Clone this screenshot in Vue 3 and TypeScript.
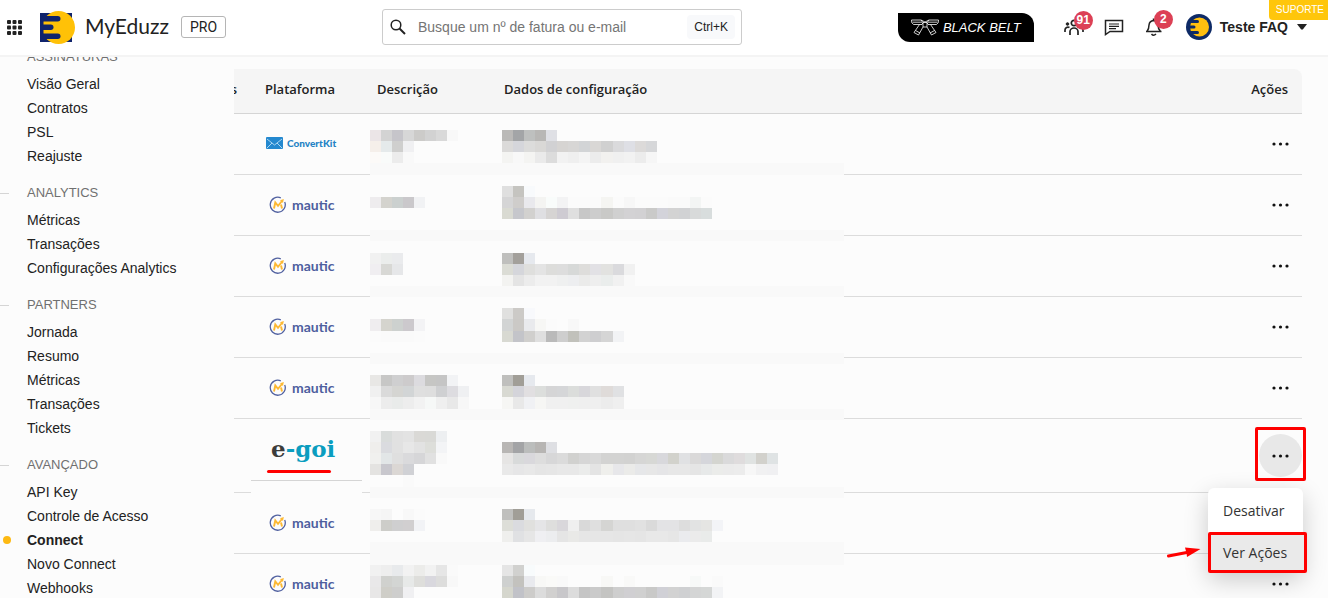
<script setup lang="ts">
interface NavItem {
  label: string
  active?: boolean
}
interface NavGroup {
  title: string
  items: NavItem[]
}
type Brand = 'convertkit' | 'mautic' | 'egoi'
interface Row {
  id: number
  brand: Brand
  open?: boolean
}
interface Cell {
  x: number
  y: number
  fill: string
}

const groups: NavGroup[] = [
  { title: 'ASSINATURAS', items: [{ label: 'Visão Geral' }, { label: 'Contratos' }, { label: 'PSL' }, { label: 'Reajuste' }] },
  { title: 'ANALYTICS', items: [{ label: 'Métricas' }, { label: 'Transações' }, { label: 'Configurações Analytics' }] },
  {
    title: 'PARTNERS',
    items: [{ label: 'Jornada' }, { label: 'Resumo' }, { label: 'Métricas' }, { label: 'Transações' }, { label: 'Tickets' }],
  },
  {
    title: 'AVANÇADO',
    items: [
      { label: 'API Key' },
      { label: 'Controle de Acesso' },
      { label: 'Connect', active: true },
      { label: 'Novo Connect' },
      { label: 'Webhooks' },
    ],
  },
]

const brands: Brand[] = ['convertkit', 'mautic', 'mautic', 'mautic', 'mautic', 'egoi', 'mautic', 'mautic']
const rows: Row[] = brands.map((brand, id) => ({ id, brand, open: brand === 'egoi' }))

// Mosaic that hides private data: [grid row, first grid column, colours of consecutive tiles]
const mosaic: [number, number, string][] = [
  [0, 0, 'ebe5e7 d3d3d3 c6c5ca d7d7d7 cccbc9 d2d2d2 d9d9d9 f8f8f8'],
  [1, 0, 'f5efea e5eaeb cfcfce f0f0f2'],
  [2, 0, 'fcfaf8 f9fbfa ececec f9f9f9'],
  [0, 12, 'bab9b7 a3a5a7 bec0bf b8b7b5 dfe0e5'],
  [1, 12, 'dbdad9 d5d6db dcdcdb d9d8d6 d1d1d3 d6d4d2 d7d6d5 d2d4d6 d9d7d5 d0d0d0 dadadc dedfe5 dcdad9 d6d7d9'],
  [2, 12, 'f4f4f2 f8f8f8 f4f4f2 eaeaea dcdcdc f2f2f2 efefef f4f4f4 ececec f2f1ef f0f0f0 f2f2f2 ececec f6f6f6'],
  [6, 0, 'eeecee d4d3ce cbd0cf cac8cb f1f2f4'],
  [5, 12, 'dfdfdf c5c4c0 f8fafc'],
  [6, 12, 'd5d5d6 cfcdcb e9e9ed f4f4f2 f9fcfb f3f3f4 fbfbfb fbfbfb fbfbfb f5f5f2 fbfbfb f7f7f7 fbfbfb fbfbfb fbfbfb fafafa fafafa f3f5f4 fbfbfb'],
  [7, 12, 'd9dad2 c6c7cc d2d1cf dfdfe2 d6d4d3 cecbd2 dfdfdf c7c7c7 cdcdcd c9c9c7 d0d0d0 d3d2d4 d2d1d3 cacac9 d3d3da d3d3d3 d1d2d4 d8dada d8dddd'],
  [11, 0, 'f1f1f1 ebedec eaebed'],
  [12, 0, 'f0eef1 d8d8d5 e6e7e9'],
  [11, 12, 'bfbfbd a3a09b e6e9ee'],
  [12, 12, 'dbdcd5 d5d6db dfdfdd e4e4e4 dddddb dddddd d7d9d8 dedddb e2e1e5 e2e2e0 dadadd f1f1f1'],
  [13, 12, 'f3f3f1 e4e4e4 ececec f2f2f2 f2f2f2 eff0f0 edeef0 ebebea eeeeee eaedec f1f1f1 f9f9f9'],
  [17, 0, 'efedef d5d4ce cdd1cf ccc9cd f3f3f5'],
  [18, 0, 'fbfbfb fafafa fafafa fafafa fbfbfb'],
  [16, 12, 'e0e0df cccac7 f8f9fc'],
  [17, 12, 'd2d4d4 cbc9c6 e9eaed f7f7f5 fbfbfb fcfcfc f8f8f8'],
  [18, 12, 'd8d9d2 c3c4c9 d0cfcd dfdfdf bababa cecece c1c1bb d2d2d2 ceced0 d5d5d5 f2f3f5'],
  [22, 0, 'e8e7e5 c7c7c6 cfcfd0 cdcbcc dcdbdf c6c6c4 c5c5c5 f2f3f5'],
  [23, 0, 'f0f0f0 dadada d5d5d2 d2d5d6 dfdfdf dedede cfd0d2 dddce0 eff0f2'],
  [24, 0, 'f7f7f7 ececec e9ebea ededed f2f2f2 f6f8f7 efefef e8e8e8 f7f7f7'],
  [22, 12, 'bfbfbd a19e97 e6e9ee'],
  [23, 12, 'd8d9d2 d4d4da e1dfe1 dcdedc d5d5d6 d5d6d8 dbdddb d8d7db e0e0e0 dfdbd9 e0e1e3'],
  [24, 12, 'f6f6f4 e8e8e8 f0f1f4 f6f6f4 f0f0f0 f0f0f0 eff0ef efefef efefef ececec efefef'],
  [27, 0, 'f1f1f1 d9dcdb e1e1e1 e3e3e3 dad9d6 d9d9d6 edeff1'],
  [28, 0, 'efeeec dadbdf e1e1e1 e7e7e7 e2e2e2 dddeda f3f4f6'],
  [29, 0, 'f0f0ee e2e6e7 dfdfdf dadadc d6d6d8 e1e1e1 f9f9f9'],
  [30, 0, 'e4e3e1 c8c7cd dbd7d4 d0d1d5'],
  [31, 3, 'fafafa'],
  [28, 12, 'b8b6b4 a3a4a6 bbbdbc b7b5b3 dedfe3'],
  [29, 12, 'e6e5e4 d8dada d9d8dc dddddd d7d7d8 dbdbdb d1d1cf d6d6d6 d9d9d9 d3d3d2 d3d3d2 d2d2d1 d6d6d5 d7d8d5 d8d8dc d2d2cc e0e1e3 dad9d9 d5d6db d4d5d0 dadadb dfdcdd e0e3e2 d2d1cc dfe3e4'],
  [30, 12, 'e9e9e9 e6e6e7 e8e8e8 e5e5e5 e6e6e6 e8e8e8 e8e8e8 ebeceb e4e4e4 efefec e7e7ea ebebe9 e6e7e9 e7e7e7 e5e5e7 e7e7e7 e7e7e7 e5e5e5 e7e9e9 ebecea ebebeb ececec f7f7f7 f1f1f2 f0f0f2'],
  [34, 0, 'f7f7f7 f5f5f5 fcfcfc f8f8f8 fbfbfb'],
  [35, 0, 'efeeec cdcdc9 cfcfd0 d1cfd0 f2f3f6'],
  [34, 12, 'bfbfbd a19e97 e6e9ed'],
  [35, 12, 'ddded8 dadbdf e0e0de e5e5e7 dededd d9d7db efefef d9d9d9 dfdfdf d5d5d3 dfdfdf dfdfdf e1e1e1 dadada e3e3e5 e3e3e5 dddddd e2e3e3 e5e5e3 f3f4f7'],
  [36, 12, 'efefed e0e1e3 e6e6e6 efeff2 ecedef e5e5e5 e9e9e7 e6e6e6 e6e6e6 e6e6e6 e5e5e5 e6e6e6 e5e5e5 e8e8e8 e8e8e8 e6e6e6 eaebee ebebeb e9ebea'],
  [39, 0, 'f1f1f1 eeeeee e8eaec f2f2f2 ececea f2f2f2 e6e6e6 fafafa'],
  [40, 0, 'e9e8e9 d0d1ce d3d5d3 e7e9e8 dededb d9d8de dddddc f8f8f8'],
  [41, 0, 'e8e7e7 cfcec8 cececd f0f0f2'],
  [39, 12, 'e5e5e5 d1d1cf f8fbfc'],
  [40, 12, 'ced0cf c3c2be e9eaee f8f8f6 fafaf8 f9f9f9 fcfcfc fcfcfc fcfcfc f8f8f6 fcfcfc f9f9f8 fcfcfc fcfcfc fcfcfc fcfcfc fcfcfc f7f9f8 fcfcfc fafafa'],
  [41, 12, 'd5d6cd c1c2c8 cdccca dcdcdc d1d0cf c8c7ca dcdcdc c5c5c5 cacaca c4c4c2 cecece d0cfd2 d0d0d0 c9c9c8 d0d0d6 d2d2d2 cfd0d2 d4d5d5 d5d7d6 f2f3f5'],
]
const tiles: Cell[] = mosaic.flatMap(([y, x, colours]) =>
  colours.split(' ').map((c, i) => ({ x: x + i, y, fill: '#' + c })),
)
const strips = [
  { y: 3, h: 1 },
  { y: 9, h: 1 },
  { y: 14, h: 1 },
  { y: 20, h: 1 },
  { y: 25, h: 1 },
  { y: 32, h: 1 },
  { y: 37, h: 2 },
]
</script>

<template>
  <div class="app">
    <header class="topbar">
      <div class="brand-area">
        <button class="icon-btn" aria-label="Aplicativos">
          <svg width="15" height="15" viewBox="0 0 15 15" fill="#222">
            <template v-for="r in 3" :key="r">
              <rect v-for="c in 3" :key="c" :x="(c - 1) * 5.5" :y="(r - 1) * 5.5" width="4" height="4" rx="1" />
            </template>
          </svg>
        </button>
        <a class="brand" href="#">
          <svg width="35" height="33" viewBox="0 0 35 33" aria-hidden="true">
            <rect x="0" y="2" width="32" height="29" fill="#10246c" />
            <circle cx="18.500" cy="16.500" r="16.500" fill="#ffc107" />
            <g fill="#10246c">
              <path d="M0 2H8L3.500 8.500V25L8 31H0z" />
              <rect x="0" y="5" width="20.500" height="5.500" rx="2.700" />
              <rect x="0" y="13.500" width="13.500" height="5.500" rx="2.700" />
              <rect x="0" y="22.500" width="20.500" height="5.500" rx="2.700" />
            </g>
          </svg>
          <span class="brand-name">MyEduzz</span>
        </a>
        <button class="plan">PRO</button>
      </div>

      <label class="search">
        <svg width="16" height="16" viewBox="0 0 16 16" fill="none" stroke="#222" stroke-width="1.500" aria-hidden="true">
          <circle cx="6" cy="6" r="4.800" />
          <path d="M9.500 9.500L15 15" stroke-width="1.900" />
        </svg>
        <input type="text" placeholder="Busque um nº de fatura ou e-mail" aria-label="Buscar" />
        <kbd>Ctrl+K</kbd>
      </label>

      <div class="tools">
        <button class="belt">
          <svg width="28" height="17" viewBox="0 0 28 17" fill="none" stroke="#fff" stroke-width=".8" stroke-linejoin="round" aria-hidden="true">
            <path d="M.5 1H10L12 3.500L11 5.500H2.500Q0 4 .5 1zM27.500 1H18L16 3.500L17 5.500H25.500Q28 4 27.500 1zM10 1L14 3L18 1M8.500 5.500L3 13.500L7.500 16L12 8M19.500 5.500L25 13.500L20.500 16L16 8M12 3.500H16V8H12zM1.500 3.200H11M26.500 3.200H17M4.500 11.500L9 14M23.500 11.500L19 14" />
          </svg>
          <span>BLACK BELT</span>
        </button>
        <button class="notify" aria-label="Comunidade">
          <svg width="20" height="18" viewBox="0 0 20 18" fill="none" stroke="#222" stroke-width="1.700">
            <circle cx="10" cy="5" r="2.700" />
            <path d="M6 17V13.500a4 3.500 0 0 1 8 0V17M1 14V12a3 3 0 0 1 4.500-2.500M19 14V12a3 3 0 0 0-4.500-2.500" />
            <circle cx="3.500" cy="6" r="1.300" fill="#222" stroke-width="1" />
            <circle cx="16.500" cy="6" r="1.300" fill="#222" stroke-width="1" />
          </svg>
          <span class="badge">91</span>
        </button>
        <button class="notify" aria-label="Mensagens">
          <svg width="20" height="18" viewBox="0 0 20 18" fill="none" stroke="#222" stroke-width="1.500">
            <path d="M1.500 2.500H18.500V13.500H6L1.500 16.500z" />
            <path d="M5 6H15M5 8.300H15M5 10.600H12" stroke-width="1.200" />
          </svg>
        </button>
        <button class="notify" aria-label="Notificações">
          <svg width="20" height="20" viewBox="0 0 20 20" fill="none" stroke="#222" stroke-width="1.500">
            <path d="M2 14.500H17.500M3 14.500Q5 12 5 8Q5.500 4 9.500 3.500Q14 4 14 8Q14 12 16.500 14.500M7.500 17Q9.500 19.500 12 17M9.500 3.500V1.500" />
          </svg>
          <span class="badge">2</span>
        </button>
        <button class="account">
          <svg width="26" height="26" viewBox="0 0 26 26" aria-hidden="true">
            <circle cx="13" cy="13" r="13" fill="#0e2a66" />
            <circle cx="13.500" cy="13" r="9.500" fill="#ffbf0f" />
            <g fill="#0e2a66">
              <rect x="3" y="6" width="10" height="3" rx="1.500" />
              <rect x="2" y="11.500" width="7.500" height="3" rx="1.500" />
              <rect x="3" y="17" width="10" height="3" rx="1.500" />
            </g>
          </svg>
          <span>Teste FAQ</span>
          <svg width="10" height="6" viewBox="0 0 10 6" aria-hidden="true"><path d="M0 0H10L5.800 5.500H4.200z" fill="#222" /></svg>
        </button>
      </div>
      <a class="support" href="#">SUPORTE</a>
    </header>

    <div class="body">
      <nav class="sidebar" aria-label="Menu principal">
        <div class="nav-scroll">
          <section v-for="g in groups" :key="g.title" class="nav-group">
            <h2>{{ g.title }}</h2>
            <ul>
              <li v-for="i in g.items" :key="i.label" :class="{ active: i.active }">
                <a href="#">{{ i.label }}</a>
              </li>
            </ul>
          </section>
        </div>
      </nav>

      <main class="content">
        <div class="table-wrap">
          <table>
            <thead>
              <tr>
                <th class="c-status"><span>Status</span></th>
                <th class="c-platform">Plataforma</th>
                <th class="c-desc">Descrição</th>
                <th class="c-data">Dados de configuração</th>
                <th class="c-actions">Ações</th>
              </tr>
            </thead>
            <tbody>
              <tr v-for="row in rows" :key="row.id" :class="{ tall: row.open }">
                <td></td>
                <td class="logo-cell">
                  <span v-if="row.brand === 'convertkit'" class="logo convertkit">
                    <svg width="17" height="12" viewBox="0 0 17 12" aria-hidden="true">
                      <rect width="17" height="12" rx="1" fill="#2488cf" />
                      <path d="M1 2L6 6L8.500 8L16 2M1 11L6 6M16 11L11 6" fill="none" stroke="#a9d5f2" stroke-width="1" />
                    </svg>
                    ConvertKit
                  </span>
                  <span v-else-if="row.brand === 'mautic'" class="logo mautic">
                    <svg width="18" height="18" viewBox="0 0 18 18" fill="none" aria-hidden="true">
                      <path d="M11.800 1.900A7.500 7.500 0 1 0 15.700 5.900" stroke="#5161a0" stroke-width="1.300" />
                      <path d="M5 12.500L6.300 6.500L9 9.800L13 5" stroke="#fdb933" stroke-width="1.900" />
                      <path d="M12 8.500L13 12.500" stroke="#fdb933" stroke-width="1.900" />
                      <path d="M11 4.200L14.800 3L14 7z" fill="#fdb933" />
                    </svg>
                    <span class="wordmark">mautic</span>
                  </span>
                  <span v-else class="logo egoi"><span class="dark">e</span>-goi</span>
                  <span v-if="row.open" class="patch"></span>
                </td>
                <td></td>
                <td></td>
                <td class="action-cell">
                  <div class="action">
                    <button class="more" :class="{ pressed: row.open }" aria-label="Ações da integração">
                      <svg width="17" height="4" viewBox="0 0 17 4" fill="#111">
                        <circle cx="2" cy="2" r="1.600" />
                        <circle cx="8.500" cy="2" r="1.600" />
                        <circle cx="15" cy="2" r="1.600" />
                      </svg>
                    </button>
                    <template v-if="row.open">
                      <span class="highlight"></span>
                      <div class="menu" role="menu">
                        <button role="menuitem">Desativar</button>
                        <button role="menuitem" class="current">Ver Ações</button>
                        <svg class="arrow" width="34" height="12" viewBox="0 0 34 12" aria-hidden="true">
                          <path d="M1.500 9L21 5.300" stroke="#f00" stroke-width="3" stroke-linecap="round" />
                          <path d="M18 .5L33.500 2L20 10L19.500 6z" fill="#f00" />
                        </svg>
                      </div>
                    </template>
                  </div>
                </td>
              </tr>
            </tbody>
          </table>
          <svg class="mosaic" viewBox="0 0 43 42" preserveAspectRatio="none" shape-rendering="crispEdges" aria-hidden="true">
            <rect width="43" height="42" fill="#fcfcfc" />
            <rect v-for="s in strips" :key="'s' + s.y" x="0" :y="s.y" width="43" :height="s.h" fill="#f9f9f9" />
            <rect v-for="(t, i) in tiles" :key="i" :x="t.x" :y="t.y" width="1" height="1" :fill="t.fill" />
          </svg>
        </div>
      </main>
    </div>
  </div>
</template>

<style>
body {
  margin: 0;
  background: #fcfcfc;
}
</style>

<style scoped>
.app {
  display: flex;
  flex-direction: column;
  height: 100vh;
  overflow: hidden;
  font: 14px "Liberation Sans", Arial, sans-serif;
  color: #222;
}
button {
  border: 0;
  padding: 0;
  background: none;
  font: inherit;
  color: inherit;
  cursor: pointer;
}
a {
  color: inherit;
  text-decoration: none;
}

.topbar {
  position: relative;
  display: flex;
  align-items: center;
  flex: none;
  height: 54px;
  padding-bottom: 1px;
  border-bottom: 2px solid #f4f4f4;
  background: #fff;
}
.brand-area {
  display: flex;
  align-items: center;
  flex: none;
  width: 375px;
  padding-left: 7px;
}
.icon-btn {
  display: flex;
}
.brand {
  display: flex;
  align-items: center;
  gap: 10px;
  margin-left: 18px;
}
.brand-name {
  font: 21px/32px Lato, sans-serif;
  padding-bottom: 2px;
}
.plan {
  margin-left: 12px;
  width: 45px;
  height: 22px;
  border: 1px solid #b5b5b5;
  border-radius: 3px;
  font: 14px Roboto, sans-serif;
}
.search {
  display: flex;
  align-items: center;
  flex: 0 1 360px;
  box-sizing: border-box;
  height: 36px;
  padding: 0 6px 0 7px;
  border: 1px solid #ccc;
  border-radius: 3px;
}
.search svg {
  flex: none;
}
.search input {
  flex: 1;
  min-width: 0;
  margin-left: 12px;
  padding: 0;
  border: 0;
  outline: 0;
  background: none;
  font: inherit;
}
.search input::placeholder {
  color: #757575;
  opacity: 1;
}
.search kbd {
  padding: 0 7px;
  border-radius: 4px;
  background: #f8f9fb;
  font: 12px/24px "Liberation Sans", Arial, sans-serif;
}
.tools {
  display: flex;
  align-items: center;
  gap: 20px;
  margin-left: auto;
  padding-right: 21px;
}
.belt {
  display: flex;
  align-items: center;
  justify-content: center;
  gap: 4px;
  width: 136px;
  height: 29px;
  margin-right: 10px;
  border-radius: 0 12px;
  background: #000;
  color: #fff;
  font-size: 13px;
  font-style: italic;
  white-space: nowrap;
}
.notify {
  position: relative;
  display: flex;
  width: 20px;
}
.badge {
  position: absolute;
  left: 10px;
  top: -7px;
  min-width: 19px;
  height: 19px;
  border-radius: 10px;
  background: #dc4055;
  color: #fff;
  font: bold 12px/19px "Liberation Sans", Arial, sans-serif;
  text-align: center;
}
.account {
  display: flex;
  align-items: center;
  gap: 8px;
  margin-left: 2px;
  font-weight: bold;
  white-space: nowrap;
}
.account span {
  margin-right: 1px;
}
.support {
  position: absolute;
  top: 0;
  right: 0;
  padding: 0 4px 0 7px;
  border-radius: 0 0 0 4px;
  background: #ffc60b;
  color: #fff;
  font-size: 10px;
  line-height: 20px;
}

.body {
  display: flex;
  flex: 1;
  min-height: 0;
}
.sidebar {
  flex: none;
  width: 234px;
  overflow: hidden;
}
.nav-scroll {
  margin-top: -15px;
}
.nav-group {
  margin-bottom: 10px;
}
.nav-group h2 {
  display: flex;
  align-items: center;
  gap: 18px;
  margin: 0;
  color: #707070;
  font: 13px/30px "Liberation Sans", Arial, sans-serif;
}
.nav-group h2::before {
  content: "";
  width: 9px;
  height: 1px;
  background: #d5d5d5;
}
.nav-group:first-child h2::before {
  background: none;
}
.nav-group ul {
  margin: 0;
  padding: 0;
  list-style: none;
}
.nav-group li {
  display: flex;
  align-items: center;
  padding-left: 27px;
  line-height: 24px;
}
.nav-group li.active {
  gap: 16px;
  padding-left: 3px;
  font-weight: bold;
}
.nav-group li.active::before {
  content: "";
  width: 8px;
  height: 8px;
  border-radius: 50%;
  background: #fdb913;
}

.content {
  flex: 1;
  min-width: 0;
  padding: 12px 26px 0 0;
  overflow: hidden;
}
.table-wrap {
  position: relative;
}
table {
  width: 100%;
  table-layout: fixed;
  border-collapse: separate;
  border-spacing: 0;
}
th {
  box-sizing: border-box;
  height: 45px;
  padding: 0 0 4px;
  border-bottom: 1px solid #d5d5d5;
  background: #f5f5f5;
  font: 600 13px "Open Sans", sans-serif;
  text-align: left;
  white-space: nowrap;
}
.c-status {
  width: 17px;
}
.c-status span {
  display: flex;
  justify-content: flex-end;
  width: 3px;
  overflow: hidden;
}
.c-platform {
  width: 112px;
  padding-left: 14px;
}
.c-desc {
  width: 127px;
  padding-left: 14px;
}
.c-data {
  width: auto;
  padding-left: 14px;
}
.c-actions {
  width: 100px;
  padding-right: 14px;
  border-top-right-radius: 8px;
  text-align: right;
}
td {
  box-sizing: border-box;
  height: 61px;
  padding: 0;
  border-bottom: 1px solid #dcdcdc;
}
.tall td {
  height: 74px;
}
.logo-cell {
  position: relative;
}
.logo {
  display: flex;
  align-items: center;
  font-family: Lato, sans-serif;
}
.convertkit {
  gap: 4px;
  padding: 0 0 2px 15px;
  color: #2583c5;
  font-size: 10px;
  font-weight: 900;
}
.mautic {
  gap: 5px;
  padding-left: 18px;
  color: #4e5f9f;
  font-size: 14px;
  font-weight: bold;
}
.wordmark {
  padding-bottom: 2px;
}
.egoi {
  padding: 0 0 14px 20px;
  color: #0a9dbf;
  font: bold 23px/28px "DejaVu Serif", serif;
}
.egoi .dark {
  color: #3c3c3b;
}
.egoi::after {
  content: "";
  position: absolute;
  left: 16px;
  top: 51px;
  width: 64px;
  height: 3px;
  border-radius: 2px;
  background: #f00;
}
.patch {
  position: absolute;
  left: 0;
  top: 61px;
  width: 111px;
  height: 13px;
  border-top: 1px solid #d5d5d5;
  background: #fcfcfc;
}
.action {
  position: relative;
  width: 43px;
  margin-left: auto;
}
.more {
  display: flex;
  align-items: center;
  justify-content: center;
  width: 43px;
  height: 43px;
  border-radius: 50%;
}
.more.pressed {
  background: #e8e8e8;
}
.highlight {
  position: absolute;
  left: -4px;
  top: -7px;
  width: 45px;
  height: 48px;
  border: 3px solid #f00;
  border-radius: 2px;
}
.menu {
  position: absolute;
  z-index: 2;
  right: -1px;
  top: 54px;
  width: 95px;
  height: 84px;
  border-radius: 6px;
  background: #fff;
  box-shadow: 0 8px 24px rgba(0, 0, 0, 0.2);
  font: 14px "Open Sans", sans-serif;
  color: #333;
}
.menu button {
  display: block;
  width: 100%;
  height: 44px;
  padding-left: 15px;
  text-align: left;
}
.menu .current {
  box-sizing: border-box;
  width: 99px;
  height: 41px;
  padding-left: 12px;
  border: 3px solid #f00;
  border-radius: 2px;
  background: #eaeaea;
}
.arrow {
  position: absolute;
  right: 102px;
  top: 59px;
}
.mosaic {
  position: absolute;
  left: 136px;
  top: 61px;
  width: 474px;
  height: 468px;
}
</style>
